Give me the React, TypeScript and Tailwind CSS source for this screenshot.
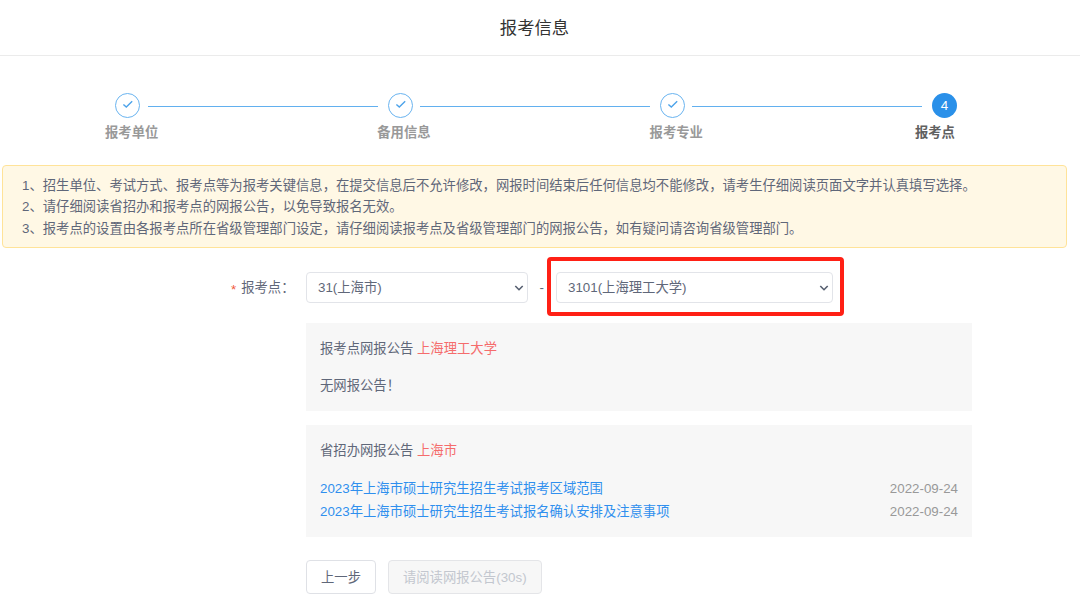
import { useState } from "react"
import clsx from "clsx"

interface Notice {
  title: string;
  date: string;
}

interface SelectBoxProps {
  options: string[];
  className?: string;
}

const STEPS = ["报考单位", "备用信息", "报考专业", "报考点"]
const CURRENT_STEP = 3

const TIPS = [
  "1、招生单位、考试方式、报考点等为报考关键信息，在提交信息后不允许修改，网报时间结束后任何信息均不能修改，请考生仔细阅读页面文字并认真填写选择。",
  "2、请仔细阅读省招办和报考点的网报公告，以免导致报名无效。",
  "3、报考点的设置由各报考点所在省级管理部门设定，请仔细阅读报考点及省级管理部门的网报公告，如有疑问请咨询省级管理部门。",
]

const NOTICES: Notice[] = [
  { title: "2023年上海市硕士研究生招生考试报考区域范围", date: "2022-09-24" },
  { title: "2023年上海市硕士研究生招生考试报名确认安排及注意事项", date: "2022-09-24" },
]

const Steps = () => (
  <div className="flex pl-[105px] pt-[37px]">
    {STEPS.map((label, index) => {
      const last = index === STEPS.length - 1

      return (
        <div key={label} className={clsx("shrink-0", last ? "w-[45px]" : "w-[272.3px]")}>
          <div className="flex h-[26px] items-start">
            {index < CURRENT_STEP ? (
              <div className="ml-[10.3px] flex size-[25px] shrink-0 items-center justify-center rounded-full border border-[#6ab4f0]">
                <svg width="12" height="12" viewBox="0 0 12 12" fill="none" className="-mt-[3px] ml-px">
                  <path d="M1.4 6.4 4.3 9 10.2 3.3" stroke="#4da3ea" strokeWidth="1.4" />
                </svg>
              </div>
            ) : (
              <div className="ml-[10px] flex size-[25px] shrink-0 items-center justify-center rounded-full bg-[#2a90e9] text-[13.33px] text-white">
                {index + 1}
              </div>
            )}
            {!last && <div className="ml-[7.5px] mt-[13px] h-px w-[230px] shrink-0 bg-[#62b0ef]" />}
          </div>
          <p className={clsx("mt-[4px] whitespace-nowrap font-bold leading-[20px]", last ? "-ml-[7px] text-[#606060]" : "text-[#999]")}>
            {label}
          </p>
        </div>
      )
    })}
  </div>
)

const SelectBox = ({ options, className }: SelectBoxProps) => {
  const [value, setValue] = useState(options[0])

  return (
    <div className={clsx("relative", className)}>
      <select
        value={value}
        onChange={(e) => setValue(e.target.value)}
        className="block h-[31px] w-full appearance-none rounded-[4px] border border-[#e2e4e9] bg-white pl-[11px] pr-8 pt-[2px] text-[#5f6779] outline-none"
      >
        {options.map((option) => (
          <option key={option}>{option}</option>
        ))}
      </select>
      <svg width="10" height="8" viewBox="0 0 10 8" fill="none" className="pointer-events-none absolute right-[4px] top-[12px]">
        <path d="M1.3 2 5 5.7 8.7 2" stroke="#565f70" strokeWidth="1.6" />
      </svg>
    </div>
  )
}

export default function App() {
  return (
    <div className="h-[611px] overflow-hidden bg-white font-['Liberation_Sans','Noto_Sans_CJK_SC',sans-serif] text-[13.33px] leading-[21.3px] text-[#5f6779]">
      <header className="flex h-[56px] items-center justify-center border-b border-[#ebebeb] pr-[11px] pt-[2px]">
        <h1 className="text-[17.33px] text-[#333]">报考信息</h1>
      </header>

      <Steps />

      {/* tips */}
      <div className="ml-[2px] mt-[22px] h-[83px] w-[1065px] rounded-[4px] border border-[#ffe399] bg-[#fff8e5] pl-[19px] pt-[9px]">
        {TIPS.map((tip) => (
          <p key={tip} className="whitespace-nowrap">{tip}</p>
        ))}
      </div>

      {/* exam site */}
      <div className="mt-[9px] flex h-[59px] items-center">
        <label className="flex w-[306px] shrink-0 items-center pl-[231px] pt-[3px]">
          <span className="mr-[5px] mt-[3px] text-[#f0593c]">*</span>
          报考点：
        </label>
        <SelectBox options={["31(上海市)"]} className="mt-px w-[222px]" />
        <span className="w-[19px] shrink-0 pl-[11.5px] pt-[3px]">-</span>
        <div className="flex h-[59px] w-[297px] items-center rounded-[4px] border-4 border-[#ff2015] pl-[5px] pt-px">
          <SelectBox options={["3101(上海理工大学)"]} className="w-[277px]" />
        </div>
      </div>

      <div className="ml-[306px] mt-[7px] w-[666px]">
        <section className="h-[88px] bg-[#f7f7f7] px-[14px] pt-[15px]">
          <p>报考点网报公告 <span className="text-[#f56c6c]">上海理工大学</span></p>
          <p className="mt-[16px]">无网报公告！</p>
        </section>

        <section className="mt-[14px] h-[112px] bg-[#f7f7f7] px-[14px] pt-[15px]">
          <p>省招办网报公告 <span className="text-[#f56c6c]">上海市</span></p>
          <ul className="mt-[16px]">
            {NOTICES.map((notice) => (
              <li key={notice.title} className="flex justify-between leading-[23px]">
                <a href="#" className="text-[#2f8fee]">{notice.title}</a>
                <span className="text-[#999]">{notice.date}</span>
              </li>
            ))}
          </ul>
        </section>

        <div className="mt-[23px] flex gap-[12px]">
          <button className="h-[34px] w-[70px] rounded-[4px] border border-[#dfe1e6] bg-white pt-[2px]">上一步</button>
          <button disabled className="h-[34px] w-[153.5px] rounded-[4px] border border-[#e4e5e8] bg-[#f7f7f7] pt-[2px] text-[#c3c7cf]">
            请阅读网报公告(30s)
          </button>
        </div>
      </div>
    </div>
  )
}
